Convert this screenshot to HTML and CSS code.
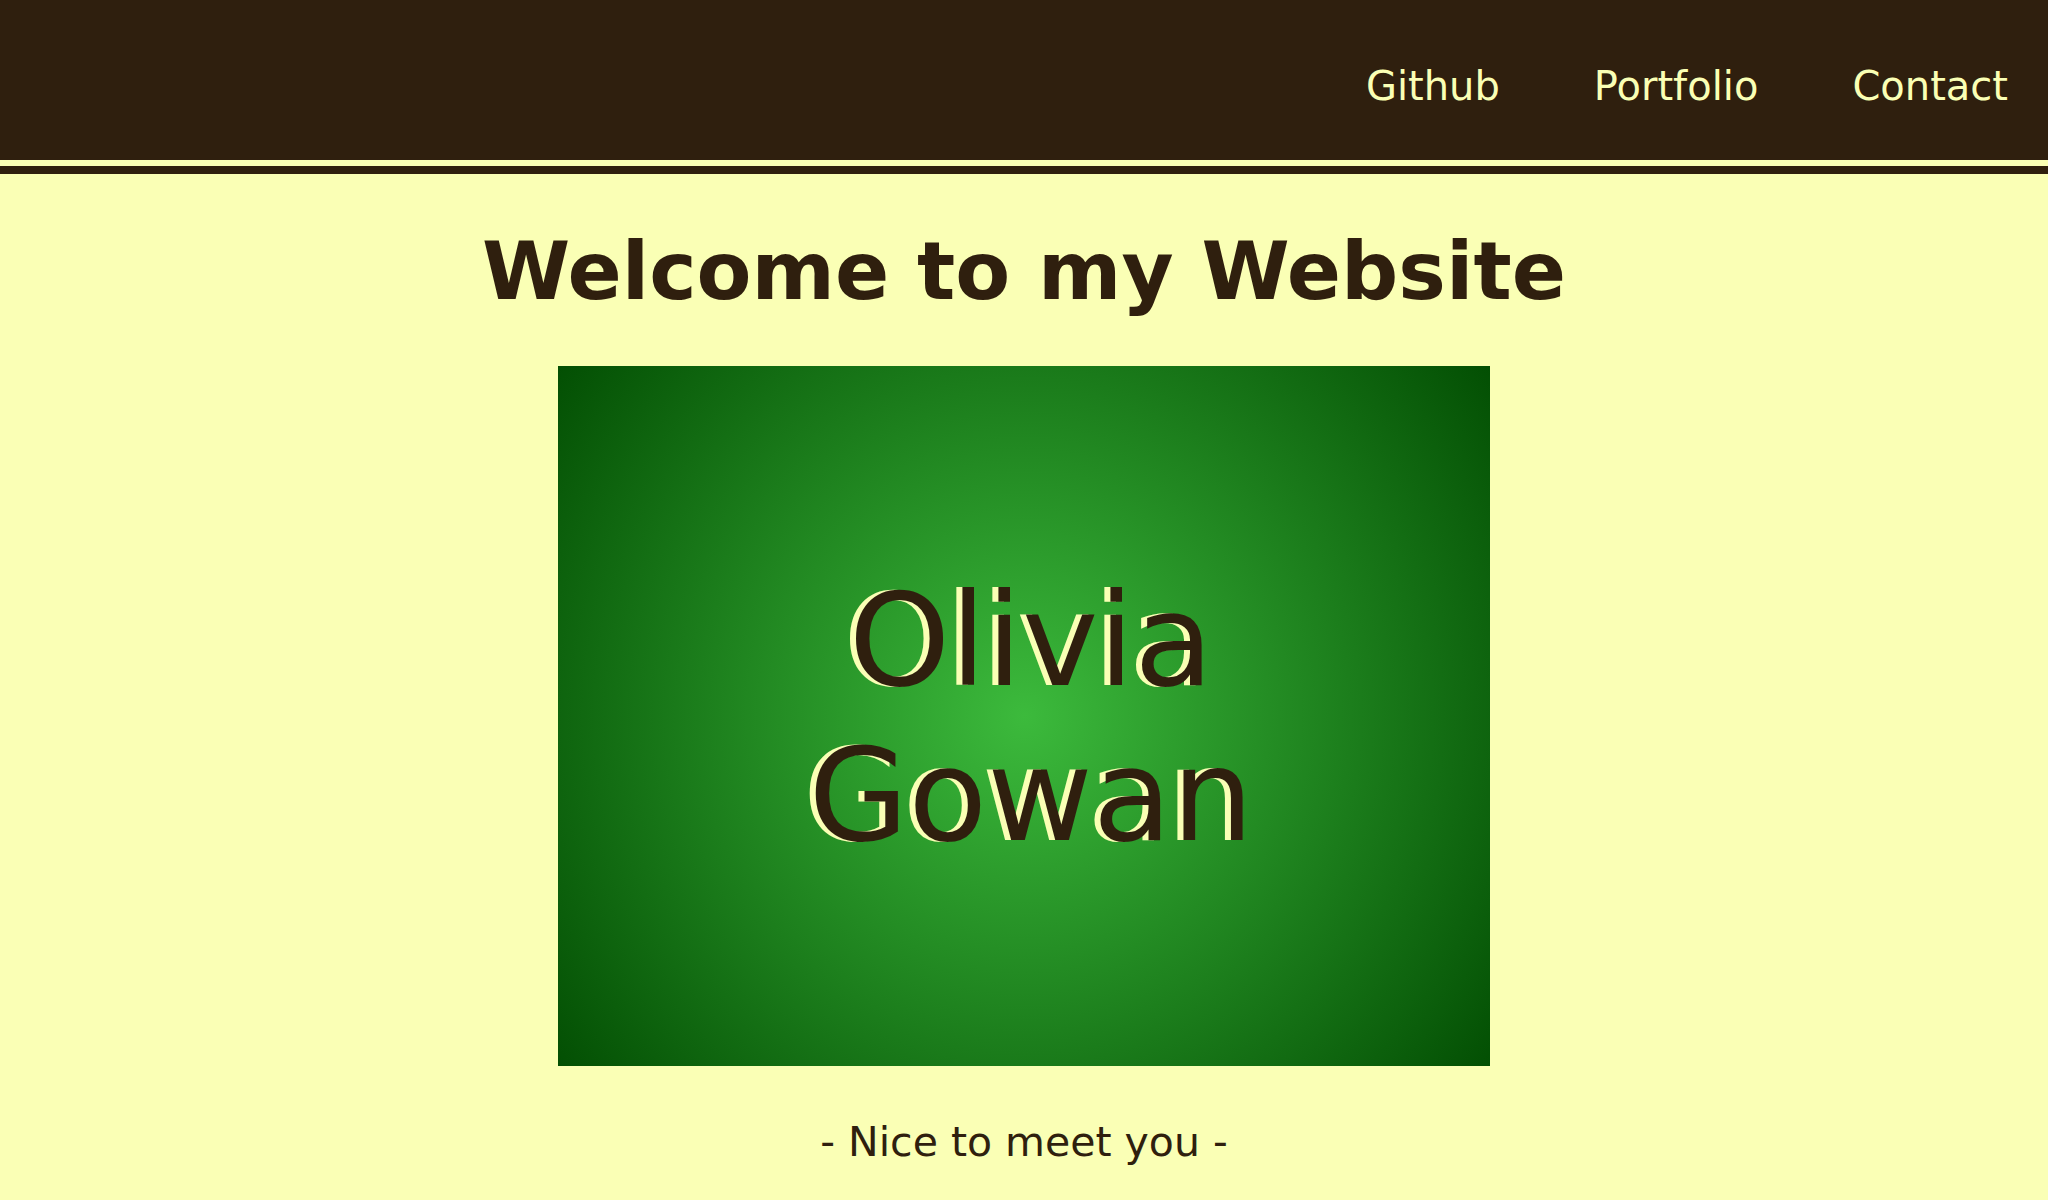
FILE: index.html
```html
<!DOCTYPE html>
<html lang="en">
<head>
<meta charset="utf-8">
<title>Olivia Gowan</title>
<link rel="stylesheet" href="styles.css">
</head>
<body>
<header class="topbar">
  <nav class="nav">
    <a class="nav-link" href="#">Github</a>
    <a class="nav-link" href="#">Portfolio</a>
    <a class="nav-link" href="#">Contact</a>
  </nav>
</header>
<div class="rule"></div>
<main class="main">
  <h1 class="title">Welcome to my Website</h1>
  <div class="hero">
    <p class="name">Olivia<br>Gowan</p>
  </div>
  <p class="tagline">- Nice to meet you -</p>
</main>
</body>
</html>
```

FILE: styles.css
```css
html, body {
  margin: 0;
  padding: 0;
}
body {
  background: #faffb5;
  color: #2f1f0e;
  font-family: "DejaVu Sans", Verdana, sans-serif;
}
.topbar {
  height: 160px;
  background: #2f1f0e;
  display: flex;
  justify-content: flex-end;
  align-items: flex-start;
}
.nav {
  display: flex;
  gap: 94px;
  padding-top: 63px;
  padding-right: 40px;
}
.nav-link {
  color: #faffb5;
  text-decoration: none;
  font-size: 40px;
  line-height: 47px;
}
.rule {
  height: 8px;
  margin-top: 6px;
  background: #2f1f0e;
}
.main {
  display: flex;
  flex-direction: column;
  align-items: center;
}
.title {
  margin: 51px 0 48px;
  font-size: 80px;
  font-weight: bold;
  line-height: 93px;
}
.hero {
  width: 932px;
  height: 700px;
  background: radial-gradient(circle, #3cba3c 0%, #034f03 100%);
  display: flex;
  align-items: center;
  justify-content: center;
}
.name {
  margin: 0;
  padding: 4px 0 0 14px;
  text-align: center;
  font-size: 129px;
  line-height: 155px;
  color: #2f1f0e;
  text-shadow: -6px 0 0 #faffb5;
}
.tagline {
  margin: 53px 0 0;
  font-size: 41px;
  line-height: 47px;
}
```
